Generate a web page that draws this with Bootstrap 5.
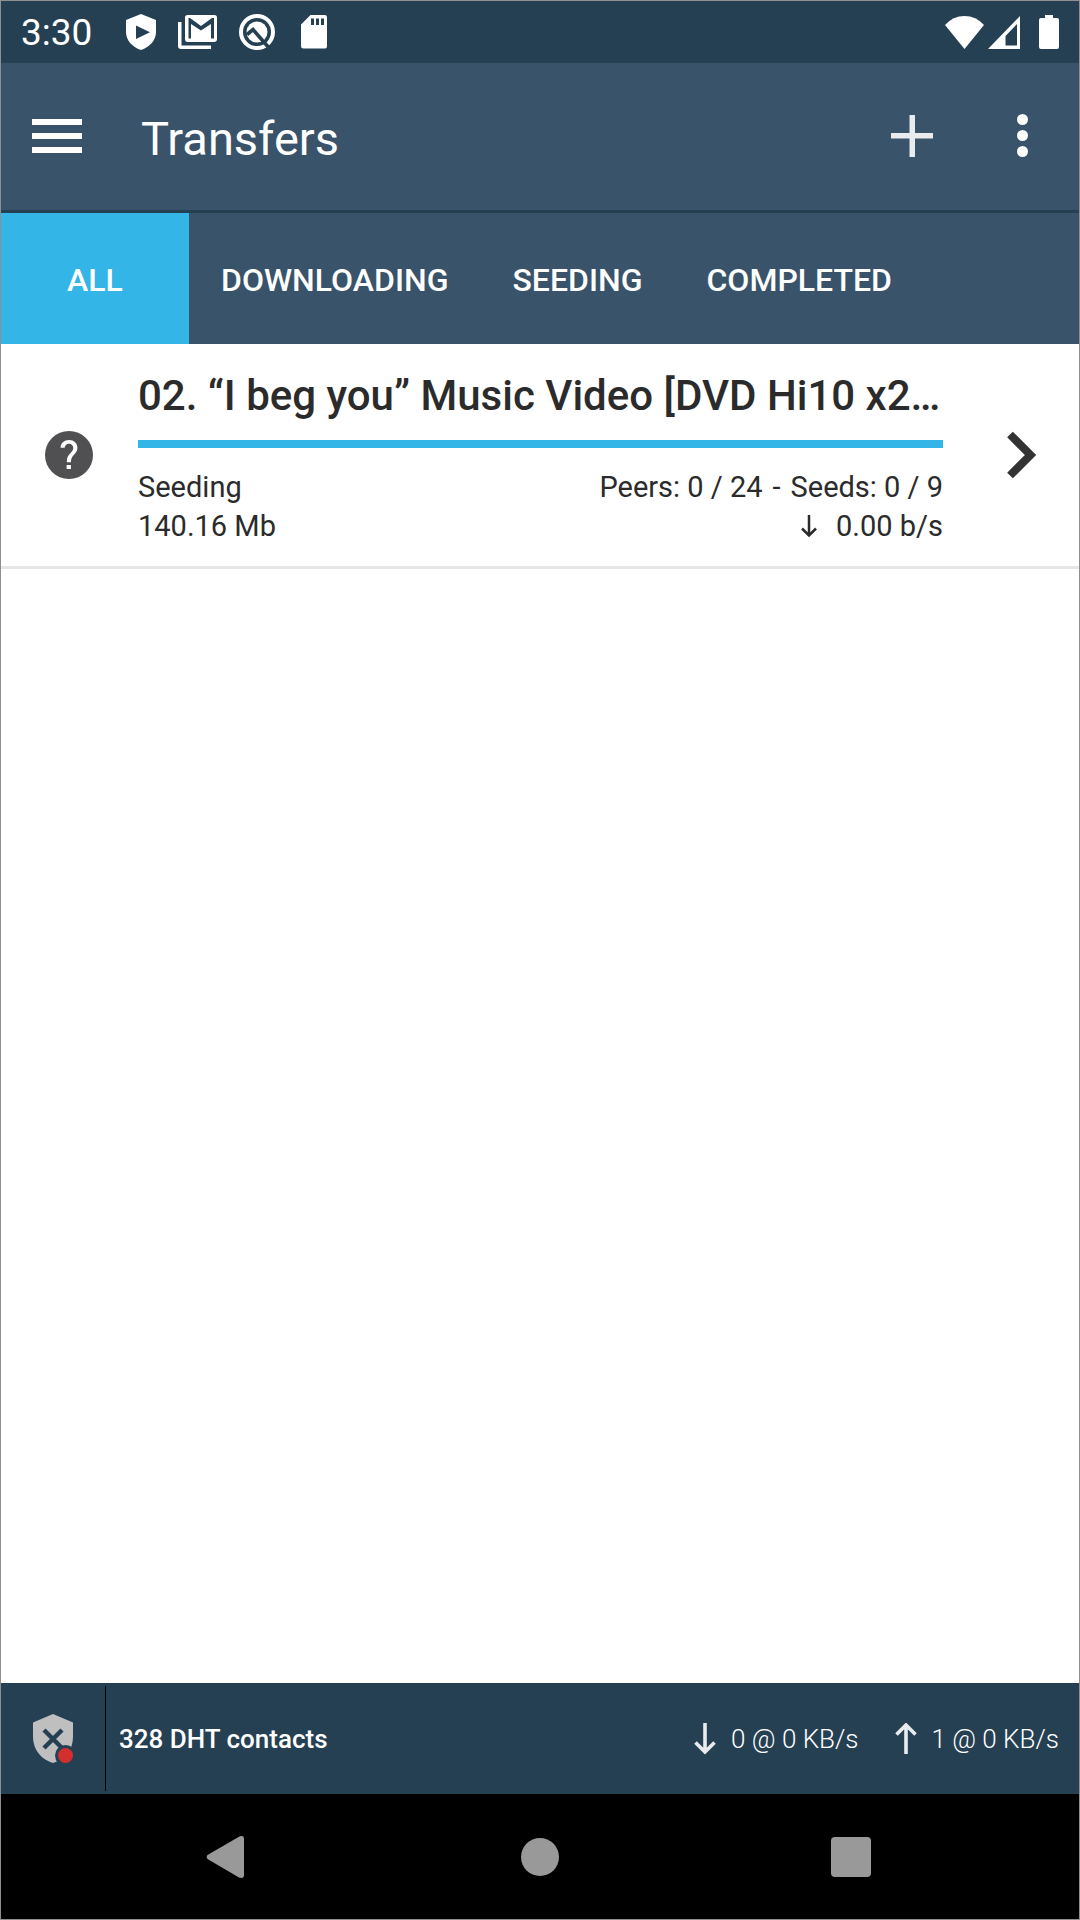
<!DOCTYPE html>
<html lang="en">
<head>
<meta charset="utf-8">
<meta name="viewport" content="width=device-width, initial-scale=1">
<title>Transfers</title>
<link href="https://cdn.jsdelivr.net/npm/bootstrap@5.3.0/dist/css/bootstrap.min.css" rel="stylesheet">
<style>
  :root { --deep: #264053; --slate: #39536a; --accent: #33b5e7; --ink: #2b2b2b; }
  body { font-family: Roboto, "Noto Sans", sans-serif; color: var(--ink); background: #fff; }
  button { background: none; border: 0; padding: 0; color: inherit; display: flex; }
  svg { display: block; flex: none; }
  .app-shell { min-height: 100vh; border: 1px solid #8f8f8f; }
  .sys-bar { background: var(--deep); height: 62px; padding: 0 20px; color: #fff; font-size: 37px; line-height: 60px; }
  .clock { margin-right: 34px; padding-top: 2px; }
  .notices { gap: 22px; }
  .sys-state .battery { margin-left: 19px; }
  .top-bar { background: var(--slate); color: #fff; height: 150px; padding: 0 51px 2px 31px; border-bottom: 3px solid var(--deep); }
  .top-bar h1 { font-size: 47px; line-height: 56px; font-weight: 400; margin: 7px 0 0 59px; }
  .top-actions { gap: 84px; }
  .tab-strip { background: var(--slate); height: 131px; }
  .tab-strip .nav-link { color: #fff; font-size: 32px; font-weight: 500; line-height: 38px; padding: 3px 32px 0; border-radius: 0; display: flex; align-items: center; justify-content: center; }
  .tab-strip .nav-link.active { background: var(--accent); min-width: 188px; }
  .transfer { padding: 20px 42px 20px 44px; border-bottom: 3px solid #e6e6e6; }
  .transfer h2 { font-size: 42px; line-height: 48px; font-weight: 500; margin: 0 0 20px; }
  .transfer .progress { height: 8px; border-radius: 0; margin-bottom: 20px; }
  .transfer .progress-bar { background: var(--accent); }
  .transfer-main { margin: 0 64px 0 45px; padding-top: 8px; min-width: 0; }
  .meta { font-size: 29px; line-height: 39px; }
  .swarm { gap: 10px; }
  .foot-bar { background: var(--deep); color: #fff; height: 111px; padding: 3px 20px 3px 0; font-size: 26px; line-height: 32px; }
  .vpn { width: 105px; border-right: 1px solid #000; }
  .dht { font-weight: 500; margin-left: 13px; }
  .rate { font-weight: 300; gap: 15px; }
  .foot-rates { gap: 36px; }
  .key-bar { background: #000; height: 125px; padding: 0 208px 0 205px; }
</style>
<script src="https://cdn.jsdelivr.net/npm/bootstrap@5.3.0/dist/js/bootstrap.bundle.min.js"></script>
</head>
<body>
<div class="app-shell d-flex flex-column">
  <div class="sys-bar d-flex align-items-center">
    <span class="clock">3:30</span>
    <div class="notices d-flex align-items-center flex-grow-1">
      <svg width="30" height="36" viewBox="0 0 30 36" fill="#fff"><path fill-rule="evenodd" d="M15 0 30 6V18C30 26 24 33 15 36 6 33 0 26 0 18V6zM10 11.500V25L24 18.200z"/></svg>
      <svg width="39" height="34" viewBox="0 0 39 34" fill="#fff"><path d="M0 7h3.500v23.500H33V34H3Q0 34 0 31z"/><path fill-rule="evenodd" d="M9.500 0H36.500Q39 0 39 2.500V24Q39 27 36 27H9.500Q7 27 7 24V2.500Q7 0 9.500 0zM10.500 3V23.500H13V9L23 15.500 33 9V23.500H36V3H34L23 11 12 3z"/></svg>
      <svg width="36" height="36" viewBox="0 0 36 36" fill="none" stroke="#fff"><circle cx="18" cy="18" r="16" stroke-width="4"/><circle cx="18" cy="18" r="10.500" fill="#fff" stroke="none"/><path d="M8 20.500 14 15.500 31 35" stroke="#264053" stroke-width="3.600"/></svg>
      <svg class="ms-1" width="26" height="34" viewBox="0 0 26 34" fill="#fff"><path fill-rule="evenodd" d="M9.500 0H24Q26 0 26 3V31Q26 33.500 24 33.500H2.500Q0 33.500 0 31V9.500zM10 3.500V10h3V3.500zM15 3.500V10h3V3.500zM20 3.500V10h3V3.500z"/></svg>
    </div>
    <div class="sys-state d-flex align-items-center">
      <svg width="39" height="33" viewBox="0 0 39 33" fill="#fff"><path d="M0 9Q8 0 19.500 0T39 9L19.500 33z"/></svg>
      <svg class="ms-1" width="32" height="33" viewBox="0 0 32 33" fill="#fff"><path fill-rule="evenodd" d="M32 0V33H0zM29 8 17.500 20V29.500H29z"/></svg>
      <svg class="battery" width="20" height="34" viewBox="0 0 20 34" fill="#fff"><path d="M6 0h8v3h4q2 0 2 2v27q0 2-2 2H2q-2 0-2-2V5q0-2 2-2h4z"/></svg>
    </div>
  </div>

  <header class="top-bar d-flex align-items-center">
    <button type="button" aria-label="Menu"><svg width="50" height="34" viewBox="0 0 50 34" fill="#fff"><path d="M0 0h50v6H0zM0 14h50v6H0zM0 28h50v6H0z"/></svg></button>
    <h1 class="flex-grow-1">Transfers</h1>
    <div class="top-actions d-flex align-items-center">
      <button type="button" aria-label="Add"><svg width="42" height="42" viewBox="0 0 42 42" fill="#e9ebef"><path d="M18.500 0h5.500v18h18v5.500H24V42h-5.500V23.500H0V18h18.500z"/></svg></button>
      <button type="button" aria-label="More"><svg width="11" height="43" viewBox="0 0 11 43" fill="#fff"><circle cx="5.500" cy="5.500" r="5.500"/><circle cx="5.500" cy="21.500" r="5.500"/><circle cx="5.500" cy="37.500" r="5.500"/></svg></button>
    </div>
  </header>

  <nav class="tab-strip nav flex-nowrap">
    <a class="nav-link active" href="#" aria-current="page">ALL</a>
    <a class="nav-link" href="#">DOWNLOADING</a>
    <a class="nav-link" href="#">SEEDING</a>
    <a class="nav-link" href="#">COMPLETED</a>
  </nav>

  <main class="flex-grow-1">
    <article class="transfer d-flex align-items-center">
      <svg width="48" height="48" viewBox="2 2 20 20" fill="#505052"><circle cx="12" cy="12" r="10"/><path fill="#fff" d="M12.800 17.800h-1.800v-1.600h1.800zM14.600 11.250l-.8.920C13.200 12.900 12.800 13.500 12.800 15h-1.700v-.5c0-1.100.4-2.100 1.070-2.830l1.100-1.260c.33-.36.500-.86.500-1.410 0-1-.8-1.700-1.770-1.700s-1.800.7-1.800 1.700H8.500c0-1.900 1.500-3.200 3.500-3.200s3.500 1.300 3.500 3.200c0 .88-.3 1.680-.9 2.250z"/></svg>
      <div class="transfer-main flex-grow-1">
        <h2 class="text-nowrap">02. “I beg you” Music Video [DVD Hi10 x2…</h2>
        <div class="progress" role="progressbar" aria-label="Progress" aria-valuenow="100" aria-valuemin="0" aria-valuemax="100"><div class="progress-bar" style="width:100%"></div></div>
        <div class="meta d-flex justify-content-between"><span>Seeding</span><span class="swarm d-flex"><span>Peers: 0 / 24</span><span>-</span><span>Seeds: 0 / 9</span></span></div>
        <div class="meta d-flex justify-content-between"><span>140.16 Mb</span><span class="d-flex align-items-center"><svg class="me-3" width="20" height="24" viewBox="0 0 20 24" fill="none" stroke="#2b2b2b" stroke-width="2.500"><path d="M9 0V21M2 13.500 9 20.500 16 13.500"/></svg>0.00 b/s</span></div>
      </div>
      <button type="button" aria-label="Details"><svg width="30" height="48" viewBox="0 0 30 48" fill="none" stroke="#333" stroke-width="8"><path d="M3 3.500 23.500 24 3 44.500"/></svg></button>
    </article>
  </main>

  <footer class="foot-bar d-flex align-items-center">
    <div class="vpn h-100 d-flex align-items-center justify-content-center">
      <svg width="42" height="50" viewBox="0 0 42 50"><path d="M21 0 41 8.500V23C41 36 32 46 21 49 10 46 1 36 1 23V8.500z" fill="#bfbfbf"/><path d="M12 16 30 34M30 16 12 34" stroke="#264053" stroke-width="4.500"/><circle cx="33.500" cy="41.500" r="10.500" fill="#264053"/><circle cx="33.500" cy="41.500" r="7.500" fill="#d32f2f"/></svg>
    </div>
    <span class="dht flex-grow-1">328 DHT contacts</span>
    <div class="foot-rates d-flex">
      <span class="rate d-flex align-items-center"><svg width="22" height="32" viewBox="0 0 22 32" fill="none" stroke="#e9ebef" stroke-width="3.600"><path d="M11 0V29M1.500 19.500 11 29 20.500 19.500"/></svg>0 @ 0 KB/s</span>
      <span class="rate d-flex align-items-center"><svg width="22" height="32" viewBox="0 0 22 32" fill="none" stroke="#e9ebef" stroke-width="3.600"><path d="M11 31V2M1.500 11.500 11 2 20.500 11.500"/></svg>1 @ 0 KB/s</span>
    </div>
  </footer>

  <nav class="key-bar d-flex align-items-center justify-content-between" aria-label="System">
    <button type="button" aria-label="Back"><svg width="42" height="42" viewBox="0 0 42 42" fill="#999"><path d="M1.500 19 33 .7Q38 -1.500 38 3V39Q38 43 33 41.500L1.500 23Q0 21 1.500 19z"/></svg></button>
    <button type="button" aria-label="Home"><svg width="38" height="38" viewBox="0 0 38 38" fill="#999"><circle cx="19" cy="19" r="19"/></svg></button>
    <button type="button" aria-label="Recent apps"><svg width="40" height="40" viewBox="0 0 40 40" fill="#999"><rect width="40" height="40" rx="4"/></svg></button>
  </nav>
</div>
</body>
</html>
